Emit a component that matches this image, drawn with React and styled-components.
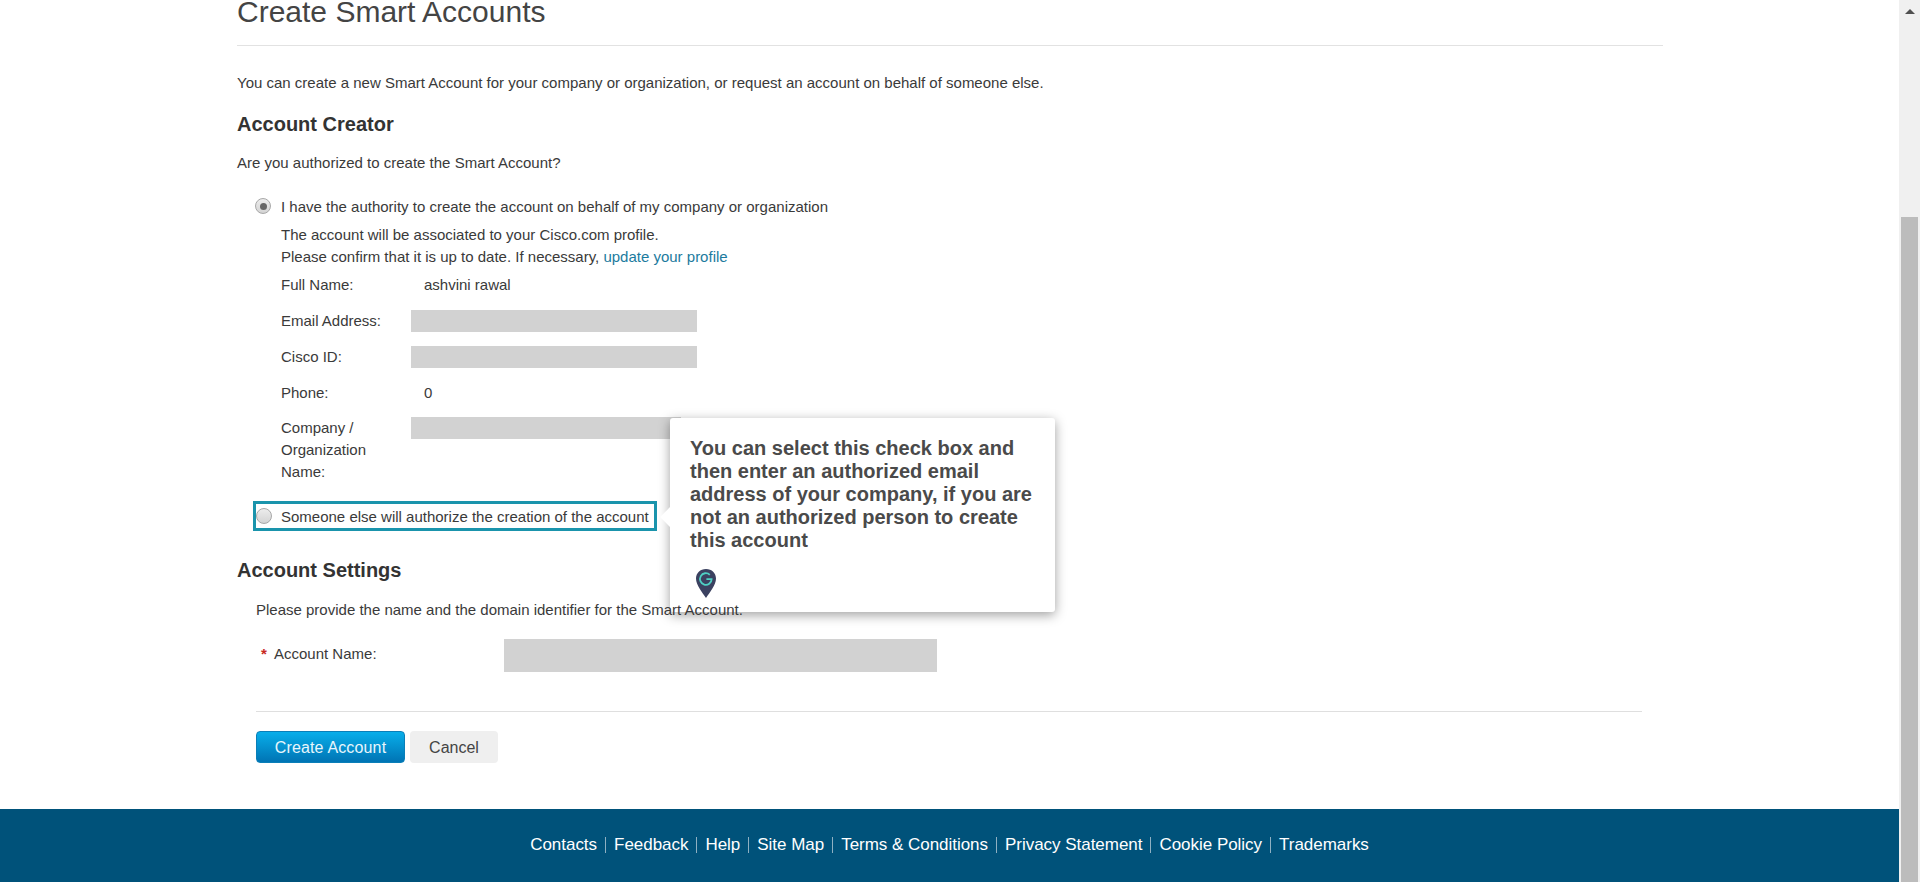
import React from "react";
import styled, { createGlobalStyle } from "styled-components";

const Global = createGlobalStyle`
  html, body { margin: 0; padding: 0; height: 100%; overflow: hidden; background: #fff; }
  * { box-sizing: border-box; }
  body { font-family: "Liberation Sans", Arial, sans-serif; font-size: 15px; color: #333; }
`;
const Shell = styled.div`display: flex; width: 1920px; height: 882px; overflow: hidden;`;
const Viewport = styled.div`flex: 1; min-width: 0; display: flex; flex-direction: column; height: 882px;`;
const Main = styled.main`flex: 1; min-height: 0; padding: 0 236px 0 237px;`;
const PageTitle = styled.h1`
  margin: -6px 0 0; padding-bottom: 15px; font-size: 30px; line-height: 36px; font-weight: 400; color: #444;
  border-bottom: 1px solid #e2e2e2;
`;
const Text = styled.p`margin: ${p => p.$top || 0}px 0 0; line-height: 20px; font-size: 15px; color: #3a3a3a;`;
const SectionTitle = styled.h2`margin: ${p => p.$top}px 0 0; font-size: 20px; line-height: 24px; font-weight: 700; color: #333;`;
const Indented = styled.div`padding-left: 19px; position: relative;`;
const RadioRow = styled.label`
  display: inline-flex; align-items: center; height: 22px; margin-top: ${p => p.$top || 0}px; color: #3a3a3a;
  ${p => p.$focused ? `
    height: 30px; width: 404px; margin-left: -3px; padding-left: 0;
    border: 3px solid #1a94ac; margin-top: 18px;
  ` : ""}
`;
const Radio = styled.span`
  width: 16px; height: 16px; border-radius: 50%; flex: none; margin-left: ${p => p.$on ? -1 : 0}px; margin-right: ${p => p.$on ? 10 : 9}px;
  border: 1px solid #a8a8a8; background: linear-gradient(#ececec, #d4d4d4);
  display: flex; align-items: center; justify-content: center;
  &::after { content: ""; width: 7px; height: 7px; border-radius: 50%; background: ${p => p.$on ? "#666" : "transparent"}; }
`;
const Details = styled.div`padding-left: 25px; width: 640px; color: #3a3a3a;`;
const Lines = styled.div`margin-top: 7px; line-height: 22px;`;
const Link = styled.a`color: #1c7b9e; text-decoration: none;`;
const Row = styled.div`display: flex; margin-top: ${p => p.$top}px; line-height: 22px;`;
const Label = styled.div`width: 106px; flex: none; margin-right: 24px;`;
const Value = styled.div`padding-left: 13px;`;
const Masked = styled.div`width: ${p => p.$width || 286}px; height: 22px; background: #d2d2d2;`;
const FormLine = styled.div`display: flex; align-items: flex-start; margin-top: 19px; height: 33px; line-height: 30px; color: #3a3a3a;`;
const Star = styled.span`color: #c8281e; width: 18px; padding-left: 5px; font-weight: 700; font-size: 15px; flex: none;`;
const FieldLabel = styled.span`width: 230px; flex: none;`;
const FieldBox = styled.div`width: 433px; height: 33px; background: #d2d2d2;`;
const Rule = styled.hr`margin: 39px 21px 0 0; border: 0; border-top: 1px solid #dfdfdf;`;
const Actions = styled.div`display: flex; gap: 5px; margin-top: 19px;`;
const Button = styled.button`
  height: 32px; padding: 2px 0 0; font: 16px "Liberation Sans", Arial, sans-serif; border-radius: 4px;
  letter-spacing: ${p => p.$primary ? "0.15px" : "0"};
  width: ${p => p.$primary ? 149 : 88}px;
  color: ${p => p.$primary ? "#e8f6fc" : "#444"};
  border: ${p => p.$primary ? "1px solid #0a7fb8" : "0"};
  background: ${p => p.$primary ? "linear-gradient(#08aeea, #0074b4)" : "#efefef"};
`;
const Tip = styled.aside`
  position: absolute; left: 433px; top: 245px; width: 385px; height: 194px; background: #fff;
  border-radius: 3px; padding: 18px 19px 18px 20px; box-shadow: 0 3px 12px rgba(0,0,0,.38);
  &::before {
    content: ""; position: absolute; left: -7px; top: 92px; width: 14px; height: 14px; background: #fff;
    transform: rotate(45deg);
  }
`;
const TipText = styled.div`font-size: 20px; line-height: 23px; font-weight: 700; color: #4a4a4a; position: relative; top: 1px;`;
const Pin = styled.svg`display: block; margin: 16px 0 0 4px; position: relative;`;
const Footer = styled.footer`
  height: 73px; flex: none; background: #00527a; display: flex; align-items: center; justify-content: center; padding-bottom: 2px;
`;
const FootLink = styled.a`
  color: #fff; font-size: 17px; line-height: 16px; padding: 0 8px; letter-spacing: -0.03px;
  & + & { border-left: 1px solid #8fb0c2; }
`;
const Scrollbar = styled.div`width: 21px; flex: none; background: #f0f0f0; display: flex; flex-direction: column; align-items: center;`;
const Arrow = styled.span`
  margin-top: 9px; width: 0; height: 0; border-left: 5px solid transparent; border-right: 5px solid transparent;
  border-bottom: 5px solid #505050;
`;
const Thumb = styled.div`width: 17px; margin-top: 203px; flex: 1; background: #bcbcbc;`;

const links = ["Contacts", "Feedback", "Help", "Site Map", "Terms & Conditions", "Privacy Statement", "Cookie Policy", "Trademarks"];

export default function App() {
  return (
    <Shell>
      <Global />
      <Viewport>
        <Main>
          <PageTitle>Create Smart Accounts</PageTitle>
          <Text $top={27}>You can create a new Smart Account for your company or organization, or request an account on behalf of someone else.</Text>
          <SectionTitle $top={19}>Account Creator</SectionTitle>
          <Text $top={17}>Are you authorized to create the Smart Account?</Text>
          <Indented>
            <RadioRow $top={22}><Radio $on />I have the authority to create the account on behalf of my company or organization</RadioRow>
            <Details>
              <Lines>The account will be associated to your Cisco.com profile.<br />Please confirm that it is up to date. If necessary, <Link>update your profile</Link></Lines>
              <Row $top={6}><Label>Full Name:</Label><Value>ashvini rawal</Value></Row>
              <Row $top={14}><Label>Email Address:</Label><Masked /></Row>
              <Row $top={14}><Label>Cisco ID:</Label><Masked /></Row>
              <Row $top={14}><Label>Phone:</Label><Value>0</Value></Row>
              <Row $top={13}><Label>Company / Organization Name:</Label><Masked $width={270} /></Row>
            </Details>
            <RadioRow $focused><Radio />Someone else will authorize the creation of the account</RadioRow>
            <Tip>
              <TipText>You can select this check box and then enter an authorized email address of your company, if you are not an authorized person to create this account</TipText>
              <Pin width="24" height="33" viewBox="0 0 24 33">
                <path d="M12 2C6.200 2 2 6.200 2 11.600c0 6.400 6.200 14 10 19.400 3.800-5.400 10-13 10-19.400C22 6.200 17.800 2 12 2z" fill="#3b4160" />
                <path d="M15.800 7.800A5.800 5.800 0 1 0 17.600 12.200H12.400" fill="none" stroke="#4fd0c4" strokeWidth="1.800" />
              </Pin>
            </Tip>
          </Indented>
          <SectionTitle $top={27}>Account Settings</SectionTitle>
          <Indented>
            <Text $top={18}>Please provide the name and the domain identifier for the Smart Account.</Text>
            <FormLine><Star>*</Star><FieldLabel>Account Name:</FieldLabel><FieldBox /></FormLine>
            <Rule />
            <Actions><Button $primary>Create Account</Button><Button>Cancel</Button></Actions>
          </Indented>
        </Main>
        <Footer>{links.map(l => <FootLink key={l}>{l}</FootLink>)}</Footer>
      </Viewport>
      <Scrollbar><Arrow /><Thumb /></Scrollbar>
    </Shell>
  );
}
